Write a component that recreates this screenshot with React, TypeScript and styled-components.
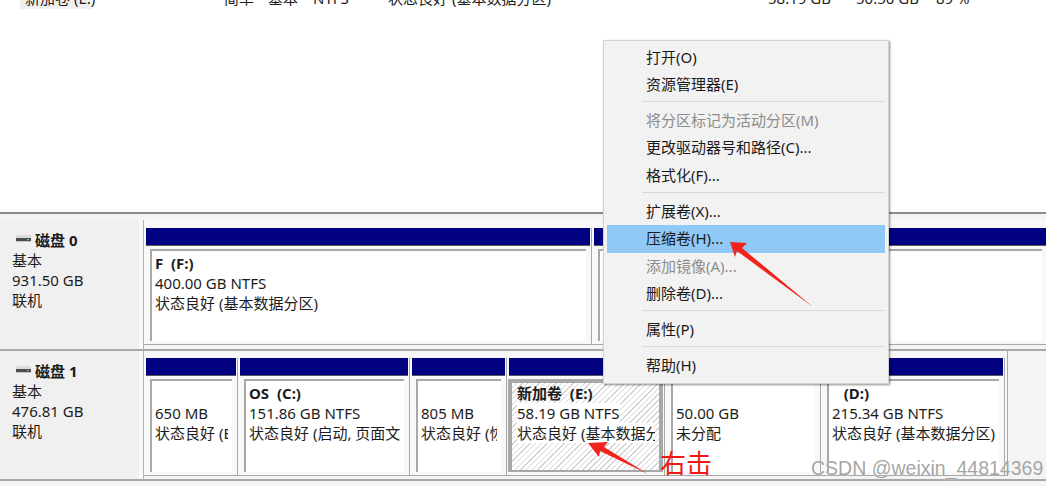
import React from "react";
import styled, { createGlobalStyle } from "styled-components";

const GlobalStyle = createGlobalStyle`
  html, body {
    margin: 0;
    padding: 0;
    background: #fff;
  }
`;

const Page = styled.div`
  position: relative;
  width: 1046px;
  height: 486px;
  overflow: hidden;
  background: #fff;
  font-family: "Noto Sans", "Noto Sans CJK SC", sans-serif;
  font-size: 15px;
  color: #1c1c1c;
`;

const ListArea = styled.div`
  height: 212px;
  overflow: hidden;
`;

const ListRow = styled.div`
  display: flex;
  height: 21px;
  margin-top: -12px;
  line-height: 20px;
  white-space: nowrap;
`;

const ListCell = styled.div<{ $width: number; $selected?: boolean }>`
  width: ${(p) => p.$width}px;
  flex: none;
  background: ${(p) => (p.$selected ? "#f0f0f0" : "transparent")};
  padding-left: ${(p) => (p.$selected ? 5 : 0)}px;
  box-sizing: border-box;
`;

const Splitter = styled.div`
  height: 2px;
  background: #8a8a8a;
`;

const Lower = styled.div`
  height: 272px;
  padding-top: 6px;
  box-sizing: border-box;
  background: #f4f4f4;
`;

const DiskRow = styled.div<{ $height: number }>`
  display: flex;
  height: ${(p) => p.$height}px;
  border-bottom: 2px solid #a8a8a8;
  box-sizing: border-box;
`;

const DiskInfo = styled.div`
  width: 143px;
  flex: none;
  background: #f0f0f0;
  padding: 10px 0 0 12px;
  box-sizing: border-box;
  line-height: 20px;
  border-right: 4px solid #f8f8f8;
`;

const DiskName = styled.div`
  display: flex;
  align-items: center;
  gap: 2px;
  padding-left: 3px;
  font-weight: 700;
`;

const Volumes = styled.div`
  flex: 1;
  min-width: 0;
  border-left: 1px solid #b4b4b4;
`;

const VolumeStrip = styled.div<{ $height: number; $top: number; $framed?: boolean }>`
  display: flex;
  width: ${(p) => (p.$framed ? "864px" : "auto")};
  height: ${(p) => p.$height}px;
  box-sizing: border-box;
  padding: ${(p) => p.$top}px 0 0 2px;
  background: #f8f8f8;
  border-bottom: 1px solid #a8a8a8;
  border-right: ${(p) => (p.$framed ? "1px solid #a8a8a8" : "none")};
`;

const Volume = styled.div<{ $width: number }>`
  width: ${(p) => p.$width}px;
  flex: none;
  display: flex;
  flex-direction: column;
  padding-right: 1px;
  margin-right: 2px;
  border-right: 1px solid #a8a8a8;
`;

const VolumeBar = styled.div`
  height: 17px;
  flex: none;
  background: #000080;
  border-bottom: 1px solid #555;
`;

const VolumeBody = styled.div<{ $selected?: boolean }>`
  flex: 1;
  min-height: 0;
  box-sizing: border-box;
  background: ${(p) =>
    p.$selected
      ? "repeating-linear-gradient(135deg, #fff 0, #fff 3px, #d4d4d4 3px, #d4d4d4 4px)"
      : "#fff"};
  margin: ${(p) => (p.$selected ? "3px 0 3px -1px" : "3px 4px 3px 4px")};
  padding: ${(p) => (p.$selected ? "0 4px 0 5px" : "2px 4px 0 3px")};
  border-top: ${(p) => (p.$selected ? 4 : 2)}px solid #a8a8a8;
  border-left: ${(p) => (p.$selected ? 4 : 2)}px solid #a8a8a8;
  border-right: ${(p) => (p.$selected ? "4px solid #a8a8a8" : "none")};
  border-bottom: ${(p) => (p.$selected ? "2px solid #a8a8a8" : "none")};
  line-height: 20px;
`;

const VolumeText = styled.div`
  overflow: hidden;
  white-space: nowrap;
`;

const VolumeTitle = styled.div`
  font-weight: 700;
  height: 20px;
  white-space: pre;
`;

const VolumeLine = styled.div<{ $selected?: boolean }>`
  width: ${(p) => (p.$selected ? "fit-content" : "auto")};
  background: ${(p) => (p.$selected ? "#fff" : "transparent")};
`;

const Menu = styled.div`
  position: absolute;
  left: 603px;
  top: 40px;
  width: 286px;
  height: 344px;
  box-sizing: border-box;
  background: #f2f2f2;
  border: 1px solid #d2d2d2;
  box-shadow: 1px 1px 2px rgba(0, 0, 0, 0.45);
  padding: 2.6px 3px 0;
`;

const MenuItem = styled.div<{ $active?: boolean; $disabled?: boolean }>`
  height: 27.4px;
  line-height: 27.4px;
  padding-left: 39px;
  font-size: 15px;
  background: ${(p) => (p.$active ? "#90c8f6" : "transparent")};
  color: ${(p) => (p.$disabled ? "#8c8c8c" : "#1a1a1a")};
  white-space: nowrap;
`;

const MenuSep = styled.div`
  height: 1px;
  background: #d8d8d8;
  margin: 3px 0 4.6px 35px;
`;

const Annotation = styled.svg`
  position: absolute;
  left: 0;
  top: 0;
  pointer-events: none;
`;

const RightClick = styled.div`
  position: absolute;
  left: 660px;
  top: 444px;
  font-size: 26px;
  line-height: 36px;
  color: #f01818;
  font-family: "Noto Sans CJK SC", sans-serif;
`;

const Watermark = styled.div`
  position: absolute;
  left: 811px;
  top: 457px;
  font-family: "Liberation Sans", sans-serif;
  font-size: 19.5px;
  line-height: 22px;
  color: rgba(140, 140, 140, 0.8);
  text-shadow: 0 0 1px #fff;
  white-space: nowrap;
`;

function DiskIcon(): JSX.Element {
  return (
    <svg width="18" height="12" viewBox="0 0 18 12">
      <rect x="1" y="1" width="15" height="3" fill="#dcdcdc" />
      <rect x="1" y="4" width="15" height="3" fill="#4c4c4c" />
      <rect x="12" y="5" width="2" height="1" fill="#4ee04e" />
      <rect x="1" y="7" width="15" height="1" fill="#c4c4c4" />
    </svg>
  );
}

type VolumeData = {
  width: number;
  title?: string;
  lines: string[];
  selected?: boolean;
};

const disk0: VolumeData[] = [
  { width: 444, title: "F  (F:)", lines: ["400.00 GB NTFS", "状态良好 (基本数据分区)"] },
  { width: 452, lines: [] },
];

const disk1: VolumeData[] = [
  { width: 90, title: " ", lines: ["650 MB", "状态良好 (EFI 系统分区)"] },
  { width: 168, title: "OS  (C:)", lines: ["151.86 GB NTFS", "状态良好 (启动, 页面文件, 故障转储)"] },
  { width: 93, title: " ", lines: ["805 MB", "状态良好 (恢复分区)"] },
  { width: 154, title: "新加卷  (E:)", lines: ["58.19 GB NTFS", "状态良好 (基本数据分区)"], selected: true },
  { width: 152, title: " ", lines: ["50.00 GB", "未分配"] },
  { width: 180, title: "   (D:)", lines: ["215.34 GB NTFS", "状态良好 (基本数据分区)"] },
];

const renderVolume = (v: VolumeData, i: number): JSX.Element => (
  <Volume key={i} $width={v.width}>
    <VolumeBar />
    <VolumeBody $selected={v.selected}>
      <VolumeText>
        <VolumeTitle>{v.title}</VolumeTitle>
        {v.lines.map((line) => (
          <VolumeLine key={line} $selected={v.selected}>{line}</VolumeLine>
        ))}
      </VolumeText>
    </VolumeBody>
  </Volume>
);

export default function App(): JSX.Element {
  return (
    <Page>
      <GlobalStyle />
      <ListArea>
        <ListRow>
          <ListCell $width={20} />
          <ListCell $width={72} $selected>新加卷 (E:)</ListCell>
          <ListCell $width={132} />
          <ListCell $width={44}>简单</ListCell>
          <ListCell $width={45}>基本</ListCell>
          <ListCell $width={75}>NTFS</ListCell>
          <ListCell $width={380}>状态良好 (基本数据分区)</ListCell>
          <ListCell $width={88}>58.19 GB</ListCell>
          <ListCell $width={80}>50.50 GB</ListCell>
          <ListCell $width={60}>89 %</ListCell>
        </ListRow>
      </ListArea>
      <Splitter />
      <Lower>
        <DiskRow $height={131}>
          <DiskInfo>
            <DiskName><DiskIcon />磁盘 0</DiskName>
            <div>基本</div>
            <div>931.50 GB</div>
            <div>联机</div>
          </DiskInfo>
          <Volumes>
            <VolumeStrip $height={125} $top={8}>{disk0.map(renderVolume)}</VolumeStrip>
          </Volumes>
        </DiskRow>
        <DiskRow $height={130}>
          <DiskInfo>
            <DiskName><DiskIcon />磁盘 1</DiskName>
            <div>基本</div>
            <div>476.81 GB</div>
            <div>联机</div>
          </DiskInfo>
          <Volumes>
            <VolumeStrip $height={125} $top={7} $framed>{disk1.map(renderVolume)}</VolumeStrip>
          </Volumes>
        </DiskRow>
      </Lower>
      <Menu>
        <MenuItem>打开(O)</MenuItem>
        <MenuItem>资源管理器(E)</MenuItem>
        <MenuSep />
        <MenuItem $disabled>将分区标记为活动分区(M)</MenuItem>
        <MenuItem>更改驱动器号和路径(C)...</MenuItem>
        <MenuItem>格式化(F)...</MenuItem>
        <MenuSep />
        <MenuItem>扩展卷(X)...</MenuItem>
        <MenuItem $active>压缩卷(H)...</MenuItem>
        <MenuItem $disabled>添加镜像(A)...</MenuItem>
        <MenuItem>删除卷(D)...</MenuItem>
        <MenuSep />
        <MenuItem>属性(P)</MenuItem>
        <MenuSep />
        <MenuItem>帮助(H)</MenuItem>
      </Menu>
      <Annotation width="1046" height="486" viewBox="0 0 1046 486">
        <polygon points="730,242 747,243 742,248 813,307 737,251 735,257" fill="#f2231a" />
        <polygon points="588,443 608,442 604,447 648,474 600,451 599,457" fill="#f2231a" />
      </Annotation>
      <RightClick>右击</RightClick>
      <Watermark>CSDN @weixin_44814369</Watermark>
    </Page>
  );
}
